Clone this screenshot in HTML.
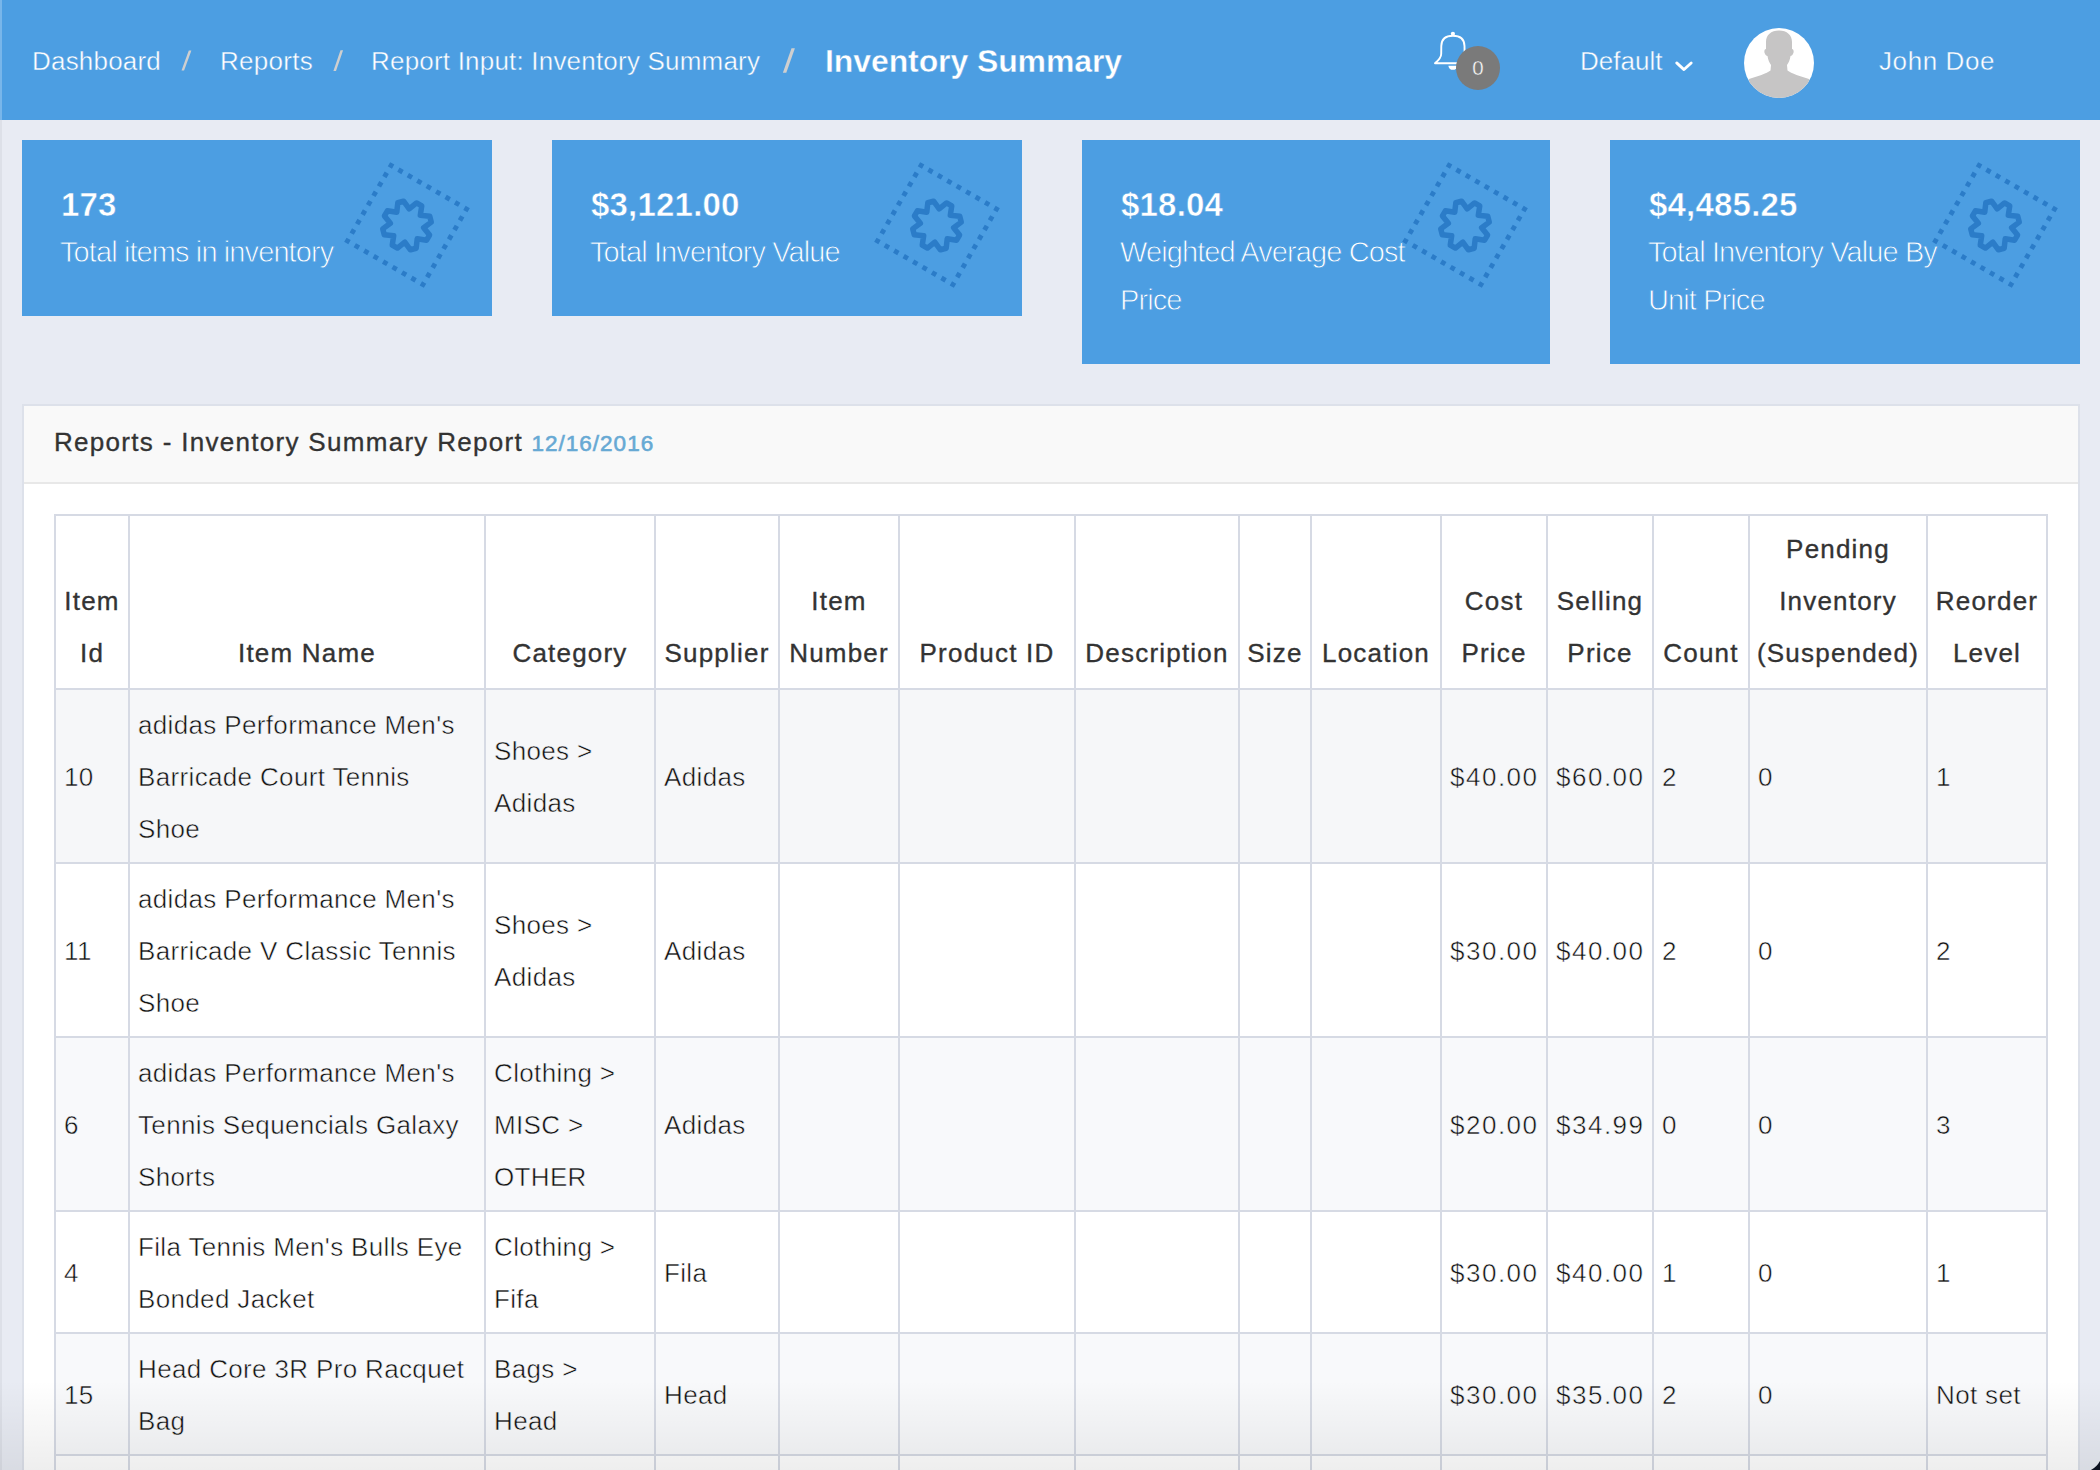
<!DOCTYPE html>
<html><head><meta charset="utf-8">
<style>
html,body{margin:0;padding:0;}
body{width:2100px;height:1470px;overflow:hidden;position:relative;background:#e8ebf3;font-family:"Liberation Sans",sans-serif;}
.abs{position:absolute;}
.hdr{position:absolute;left:0;top:0;width:2100px;height:120px;background:#4c9ee2;}
.bc{position:absolute;top:1px;height:120px;line-height:120px;color:#fff;font-size:26px;white-space:nowrap;-webkit-text-stroke:0.4px #4c9ee2;}
.sl{position:absolute;color:#cfcfcf;font-size:26px;}
.card{position:absolute;top:140px;background:#4c9ee2;color:#fff;overflow:hidden;}
.num{position:absolute;left:39px;font-size:33px;font-weight:bold;letter-spacing:0.2px;white-space:nowrap;-webkit-text-stroke:0.5px #4c9ee2;}
.lbl{position:absolute;left:38px;font-size:29px;letter-spacing:-0.9px;line-height:48px;white-space:nowrap;-webkit-text-stroke:0.8px #4c9ee2;}
.cell{position:absolute;box-sizing:border-box;padding:8px;line-height:52px;font-size:26px;color:#222;white-space:nowrap;overflow:hidden;}
.th{display:flex;align-items:flex-end;justify-content:center;text-align:center;color:#333;padding-bottom:9px;letter-spacing:1.2px;-webkit-text-stroke:0.35px #333;}
.td{display:flex;align-items:center;letter-spacing:0.35px;color:#111;padding-top:9px;padding-bottom:7px;}
.pr{letter-spacing:1.5px;}
</style></head><body>

<div class="abs" style="left:0;top:0;width:2px;height:1470px;background:#dde0e8"></div>
<div class="hdr"></div>
<div class="abs" style="left:0;top:0;width:2px;height:120px;background:#78b6ea"></div>
<div class="bc" style="left:32px;letter-spacing:0.2px">Dashboard</div>
<div class="bc" style="left:220px;letter-spacing:0.3px">Reports</div>
<div class="bc" style="left:371px;letter-spacing:0.2px">Report Input: Inventory Summary</div>
<div class="bc" style="left:825px;font-size:32px;font-weight:bold;letter-spacing:-0.1px;">Inventory Summary</div>
<svg class="abs" style="left:0;top:0" width="800" height="80"><polygon points="188.8,50.6 191.4,50.6 184.1,70.4 181.5,70.4" fill="#cfcfcf"/></svg>
<svg class="abs" style="left:0;top:0" width="800" height="80"><polygon points="340.5,50.2 343.1,50.2 336.0,70.9 333.4,70.9" fill="#cfcfcf"/></svg>
<svg class="abs" style="left:0;top:0" width="800" height="80"><polygon points="791.5,48.2 794.9,48.2 786.3,72.7 782.9,72.7" fill="#cfcfcf"/></svg>
<svg class="abs" style="left:1430px;top:28px" width="46" height="46" viewBox="0 0 46 46">
<path d="M5 35.3 C 9 32, 11.2 29, 11.2 26 L 11.3 18 C 11.5 11, 16 7.8, 22.9 7.8 C 29.8 7.8, 34.3 11, 34.5 18 L 34.6 26 C 34.6 29, 36.8 32, 40.8 35.3 Z" fill="none" stroke="#fff" stroke-width="1.9" stroke-linejoin="round"/>
<circle cx="22.9" cy="5.8" r="2.1" fill="#fff"/>
<path d="M18.4 37.8 A4.5 4 0 0 0 27.4 37.8 Z" fill="#fff"/>
</svg>
<div class="abs" style="left:1456px;top:46px;width:44px;height:44px;border-radius:50%;background:#7a7a7a;color:#fff;font-size:20.5px;line-height:44px;text-align:center;-webkit-text-stroke:0.4px #7a7a7a;">0</div>
<div class="bc" style="left:1580px;">Default</div>
<svg class="abs" style="left:1673px;top:59px" width="22" height="14"><polyline points="3.7,3.9 11,10.6 18.2,3.9" fill="none" stroke="#fff" stroke-width="2.8" stroke-linecap="round" stroke-linejoin="round"/></svg>
<svg class="abs" style="left:1744px;top:28px" width="70" height="70" viewBox="0 0 70 70">
<defs><clipPath id="cc"><circle cx="35" cy="35" r="35"/></clipPath></defs>
<circle cx="35" cy="35" r="35" fill="#fff"/>
<g clip-path="url(#cc)" fill="#c6c5c5">
<path d="M35 2.5 C 27 2.5, 22 7, 22 14 L 22 21 C 20.5 21, 20 23, 20.6 25 C 21.2 27, 22.5 28, 23.5 28 C 24 32, 25.5 35, 27 37 L 26.5 42.5 C 23 45.5, 13 48.5, 5 51 L 0 70 L 70 70 L 65 51 C 57 48.5, 47 45.5, 43.5 42.5 L 43 37 C 44.5 35, 46 32, 46.5 28 C 47.5 28, 48.8 27, 49.4 25 C 50 23, 49.5 21, 48 21 L 48 14 C 48 7, 43 2.5, 35 2.5 Z"/>
</g></svg>
<div class="bc" style="left:1879px;letter-spacing:0.6px">John Doe</div>
<div class="card" style="left:22px;width:470px;height:176px;">
<svg style="position:absolute;left:315px;top:15px" width="140" height="140" viewBox="0 0 140 140">
<g transform="rotate(30 70 70)">
<rect x="26.4" y="26.4" width="87.2" height="87.2" fill="none" stroke="#2b7cc8" stroke-width="4.8" stroke-dasharray="4.8 6.1" stroke-dashoffset="2.4"/>
</g>
<path d="M79.57,47.95 L84.74,50.93 L83.33,60.27 L92.72,61.32 L94.26,67.09 L86.66,72.69 L92.55,80.07 L89.57,85.24 L80.23,83.83 L79.18,93.22 L73.41,94.76 L67.81,87.16 L60.43,93.05 L55.26,90.07 L56.67,80.73 L47.28,79.68 L45.74,73.91 L53.34,68.31 L47.45,60.93 L50.43,55.76 L59.77,57.17 L60.82,47.78 L66.59,46.24 L72.19,53.84 Z" fill="none" stroke="#2b7cc8" stroke-width="5.5" stroke-linejoin="round"/>
</svg>
<div class="num" style="top:46px;">173</div>
<div class="lbl" style="top:88px;">Total items in inventory</div>
</div>
<div class="card" style="left:552px;width:470px;height:176px;">
<svg style="position:absolute;left:315px;top:15px" width="140" height="140" viewBox="0 0 140 140">
<g transform="rotate(30 70 70)">
<rect x="26.4" y="26.4" width="87.2" height="87.2" fill="none" stroke="#2b7cc8" stroke-width="4.8" stroke-dasharray="4.8 6.1" stroke-dashoffset="2.4"/>
</g>
<path d="M79.57,47.95 L84.74,50.93 L83.33,60.27 L92.72,61.32 L94.26,67.09 L86.66,72.69 L92.55,80.07 L89.57,85.24 L80.23,83.83 L79.18,93.22 L73.41,94.76 L67.81,87.16 L60.43,93.05 L55.26,90.07 L56.67,80.73 L47.28,79.68 L45.74,73.91 L53.34,68.31 L47.45,60.93 L50.43,55.76 L59.77,57.17 L60.82,47.78 L66.59,46.24 L72.19,53.84 Z" fill="none" stroke="#2b7cc8" stroke-width="5.5" stroke-linejoin="round"/>
</svg>
<div class="num" style="top:46px;">$3,121.00</div>
<div class="lbl" style="top:88px;">Total Inventory Value</div>
</div>
<div class="card" style="left:1082px;width:468px;height:224px;">
<svg style="position:absolute;left:313px;top:15px" width="140" height="140" viewBox="0 0 140 140">
<g transform="rotate(30 70 70)">
<rect x="26.4" y="26.4" width="87.2" height="87.2" fill="none" stroke="#2b7cc8" stroke-width="4.8" stroke-dasharray="4.8 6.1" stroke-dashoffset="2.4"/>
</g>
<path d="M79.57,47.95 L84.74,50.93 L83.33,60.27 L92.72,61.32 L94.26,67.09 L86.66,72.69 L92.55,80.07 L89.57,85.24 L80.23,83.83 L79.18,93.22 L73.41,94.76 L67.81,87.16 L60.43,93.05 L55.26,90.07 L56.67,80.73 L47.28,79.68 L45.74,73.91 L53.34,68.31 L47.45,60.93 L50.43,55.76 L59.77,57.17 L60.82,47.78 L66.59,46.24 L72.19,53.84 Z" fill="none" stroke="#2b7cc8" stroke-width="5.5" stroke-linejoin="round"/>
</svg>
<div class="num" style="top:46px;">$18.04</div>
<div class="lbl" style="top:88px;">Weighted Average Cost<br>Price</div>
</div>
<div class="card" style="left:1610px;width:470px;height:224px;">
<svg style="position:absolute;left:315px;top:15px" width="140" height="140" viewBox="0 0 140 140">
<g transform="rotate(30 70 70)">
<rect x="26.4" y="26.4" width="87.2" height="87.2" fill="none" stroke="#2b7cc8" stroke-width="4.8" stroke-dasharray="4.8 6.1" stroke-dashoffset="2.4"/>
</g>
<path d="M79.57,47.95 L84.74,50.93 L83.33,60.27 L92.72,61.32 L94.26,67.09 L86.66,72.69 L92.55,80.07 L89.57,85.24 L80.23,83.83 L79.18,93.22 L73.41,94.76 L67.81,87.16 L60.43,93.05 L55.26,90.07 L56.67,80.73 L47.28,79.68 L45.74,73.91 L53.34,68.31 L47.45,60.93 L50.43,55.76 L59.77,57.17 L60.82,47.78 L66.59,46.24 L72.19,53.84 Z" fill="none" stroke="#2b7cc8" stroke-width="5.5" stroke-linejoin="round"/>
</svg>
<div class="num" style="top:46px;">$4,485.25</div>
<div class="lbl" style="top:88px;">Total Inventory Value By<br>Unit Price</div>
</div>
<div class="abs" style="left:22px;top:404px;width:2054px;height:1100px;border:2px solid #dde1ea;background:#fff;"></div>
<div class="abs" style="left:24px;top:406px;width:2054px;height:76px;background:#f9f9f9;border-bottom:2px solid #e8e8e8;"></div>
<div class="abs" style="left:54px;top:406px;height:72px;line-height:72px;font-size:26px;color:#333;letter-spacing:1.3px;-webkit-text-stroke:0.35px #333;white-space:nowrap;">Reports - Inventory Summary Report <span style="color:#67a9d4;font-size:22.5px;letter-spacing:1px;-webkit-text-stroke:0.6px #67a9d4;">12/16/2016</span></div>
<div class="abs" style="left:56px;top:516px;width:1990px;height:172px;background:#fff"></div>
<div class="abs" style="left:56px;top:690px;width:1990px;height:172px;background:#f6f7f9"></div>
<div class="abs" style="left:56px;top:864px;width:1990px;height:172px;background:#fff"></div>
<div class="abs" style="left:56px;top:1038px;width:1990px;height:172px;background:#f8f9fb"></div>
<div class="abs" style="left:56px;top:1212px;width:1990px;height:120px;background:#fff"></div>
<div class="abs" style="left:56px;top:1334px;width:1990px;height:120px;background:#f8f9fb"></div>
<div class="abs" style="left:56px;top:1456px;width:1990px;height:172px;background:#fff"></div>
<div class="abs" style="left:54px;top:514px;width:2px;height:956px;background:#d6dae4"></div>
<div class="abs" style="left:128px;top:514px;width:2px;height:956px;background:#d6dae4"></div>
<div class="abs" style="left:484px;top:514px;width:2px;height:956px;background:#d6dae4"></div>
<div class="abs" style="left:654px;top:514px;width:2px;height:956px;background:#d6dae4"></div>
<div class="abs" style="left:778px;top:514px;width:2px;height:956px;background:#d6dae4"></div>
<div class="abs" style="left:898px;top:514px;width:2px;height:956px;background:#d6dae4"></div>
<div class="abs" style="left:1074px;top:514px;width:2px;height:956px;background:#d6dae4"></div>
<div class="abs" style="left:1238px;top:514px;width:2px;height:956px;background:#d6dae4"></div>
<div class="abs" style="left:1310px;top:514px;width:2px;height:956px;background:#d6dae4"></div>
<div class="abs" style="left:1440px;top:514px;width:2px;height:956px;background:#d6dae4"></div>
<div class="abs" style="left:1546px;top:514px;width:2px;height:956px;background:#d6dae4"></div>
<div class="abs" style="left:1652px;top:514px;width:2px;height:956px;background:#d6dae4"></div>
<div class="abs" style="left:1748px;top:514px;width:2px;height:956px;background:#d6dae4"></div>
<div class="abs" style="left:1926px;top:514px;width:2px;height:956px;background:#d6dae4"></div>
<div class="abs" style="left:2046px;top:514px;width:2px;height:956px;background:#d6dae4"></div>
<div class="abs" style="left:54px;top:514px;width:1994px;height:2px;background:#d6dae4"></div>
<div class="abs" style="left:54px;top:688px;width:1994px;height:2px;background:#d6dae4"></div>
<div class="abs" style="left:54px;top:862px;width:1994px;height:2px;background:#d6dae4"></div>
<div class="abs" style="left:54px;top:1036px;width:1994px;height:2px;background:#d6dae4"></div>
<div class="abs" style="left:54px;top:1210px;width:1994px;height:2px;background:#d6dae4"></div>
<div class="abs" style="left:54px;top:1332px;width:1994px;height:2px;background:#d6dae4"></div>
<div class="abs" style="left:54px;top:1454px;width:1994px;height:2px;background:#d6dae4"></div>
<div class="cell th" style="left:56px;top:516px;width:72px;height:172px;"><div>Item<br>Id</div></div>
<div class="cell th" style="left:130px;top:516px;width:354px;height:172px;"><div>Item Name</div></div>
<div class="cell th" style="left:486px;top:516px;width:168px;height:172px;"><div>Category</div></div>
<div class="cell th" style="left:656px;top:516px;width:122px;height:172px;"><div>Supplier</div></div>
<div class="cell th" style="left:780px;top:516px;width:118px;height:172px;"><div>Item<br>Number</div></div>
<div class="cell th" style="left:900px;top:516px;width:174px;height:172px;"><div>Product ID</div></div>
<div class="cell th" style="left:1076px;top:516px;width:162px;height:172px;"><div>Description</div></div>
<div class="cell th" style="left:1240px;top:516px;width:70px;height:172px;"><div>Size</div></div>
<div class="cell th" style="left:1312px;top:516px;width:128px;height:172px;"><div>Location</div></div>
<div class="cell th" style="left:1442px;top:516px;width:104px;height:172px;"><div>Cost<br>Price</div></div>
<div class="cell th" style="left:1548px;top:516px;width:104px;height:172px;"><div>Selling<br>Price</div></div>
<div class="cell th" style="left:1654px;top:516px;width:94px;height:172px;"><div>Count</div></div>
<div class="cell th" style="left:1750px;top:516px;width:176px;height:172px;"><div>Pending<br>Inventory<br>(Suspended)</div></div>
<div class="cell th" style="left:1928px;top:516px;width:118px;height:172px;"><div>Reorder<br>Level</div></div>
<div class="cell td" style="left:56px;top:690px;width:72px;height:172px;-webkit-text-stroke:0.5px #f6f7f9;"><div>10</div></div>
<div class="cell td" style="left:130px;top:690px;width:354px;height:172px;-webkit-text-stroke:0.5px #f6f7f9;"><div>adidas Performance Men's<br>Barricade Court Tennis<br>Shoe</div></div>
<div class="cell td" style="left:486px;top:690px;width:168px;height:172px;-webkit-text-stroke:0.5px #f6f7f9;"><div>Shoes &gt;<br>Adidas</div></div>
<div class="cell td" style="left:656px;top:690px;width:122px;height:172px;-webkit-text-stroke:0.5px #f6f7f9;"><div>Adidas</div></div>
<div class="cell td pr" style="left:1442px;top:690px;width:104px;height:172px;-webkit-text-stroke:0.5px #f6f7f9;"><div>$40.00</div></div>
<div class="cell td pr" style="left:1548px;top:690px;width:104px;height:172px;-webkit-text-stroke:0.5px #f6f7f9;"><div>$60.00</div></div>
<div class="cell td" style="left:1654px;top:690px;width:94px;height:172px;-webkit-text-stroke:0.5px #f6f7f9;"><div>2</div></div>
<div class="cell td" style="left:1750px;top:690px;width:176px;height:172px;-webkit-text-stroke:0.5px #f6f7f9;"><div>0</div></div>
<div class="cell td" style="left:1928px;top:690px;width:118px;height:172px;-webkit-text-stroke:0.5px #f6f7f9;"><div>1</div></div>
<div class="cell td" style="left:56px;top:864px;width:72px;height:172px;-webkit-text-stroke:0.5px #ffffff;"><div>11</div></div>
<div class="cell td" style="left:130px;top:864px;width:354px;height:172px;-webkit-text-stroke:0.5px #ffffff;"><div>adidas Performance Men's<br>Barricade V Classic Tennis<br>Shoe</div></div>
<div class="cell td" style="left:486px;top:864px;width:168px;height:172px;-webkit-text-stroke:0.5px #ffffff;"><div>Shoes &gt;<br>Adidas</div></div>
<div class="cell td" style="left:656px;top:864px;width:122px;height:172px;-webkit-text-stroke:0.5px #ffffff;"><div>Adidas</div></div>
<div class="cell td pr" style="left:1442px;top:864px;width:104px;height:172px;-webkit-text-stroke:0.5px #ffffff;"><div>$30.00</div></div>
<div class="cell td pr" style="left:1548px;top:864px;width:104px;height:172px;-webkit-text-stroke:0.5px #ffffff;"><div>$40.00</div></div>
<div class="cell td" style="left:1654px;top:864px;width:94px;height:172px;-webkit-text-stroke:0.5px #ffffff;"><div>2</div></div>
<div class="cell td" style="left:1750px;top:864px;width:176px;height:172px;-webkit-text-stroke:0.5px #ffffff;"><div>0</div></div>
<div class="cell td" style="left:1928px;top:864px;width:118px;height:172px;-webkit-text-stroke:0.5px #ffffff;"><div>2</div></div>
<div class="cell td" style="left:56px;top:1038px;width:72px;height:172px;-webkit-text-stroke:0.5px #f8f9fb;"><div>6</div></div>
<div class="cell td" style="left:130px;top:1038px;width:354px;height:172px;-webkit-text-stroke:0.5px #f8f9fb;"><div>adidas Performance Men's<br>Tennis Sequencials Galaxy<br>Shorts</div></div>
<div class="cell td" style="left:486px;top:1038px;width:168px;height:172px;-webkit-text-stroke:0.5px #f8f9fb;"><div>Clothing &gt;<br>MISC &gt;<br>OTHER</div></div>
<div class="cell td" style="left:656px;top:1038px;width:122px;height:172px;-webkit-text-stroke:0.5px #f8f9fb;"><div>Adidas</div></div>
<div class="cell td pr" style="left:1442px;top:1038px;width:104px;height:172px;-webkit-text-stroke:0.5px #f8f9fb;"><div>$20.00</div></div>
<div class="cell td pr" style="left:1548px;top:1038px;width:104px;height:172px;-webkit-text-stroke:0.5px #f8f9fb;"><div>$34.99</div></div>
<div class="cell td" style="left:1654px;top:1038px;width:94px;height:172px;-webkit-text-stroke:0.5px #f8f9fb;"><div>0</div></div>
<div class="cell td" style="left:1750px;top:1038px;width:176px;height:172px;-webkit-text-stroke:0.5px #f8f9fb;"><div>0</div></div>
<div class="cell td" style="left:1928px;top:1038px;width:118px;height:172px;-webkit-text-stroke:0.5px #f8f9fb;"><div>3</div></div>
<div class="cell td" style="left:56px;top:1212px;width:72px;height:120px;-webkit-text-stroke:0.5px #ffffff;"><div>4</div></div>
<div class="cell td" style="left:130px;top:1212px;width:354px;height:120px;-webkit-text-stroke:0.5px #ffffff;"><div>Fila Tennis Men's Bulls Eye<br>Bonded Jacket</div></div>
<div class="cell td" style="left:486px;top:1212px;width:168px;height:120px;-webkit-text-stroke:0.5px #ffffff;"><div>Clothing &gt;<br>Fifa</div></div>
<div class="cell td" style="left:656px;top:1212px;width:122px;height:120px;-webkit-text-stroke:0.5px #ffffff;"><div>Fila</div></div>
<div class="cell td pr" style="left:1442px;top:1212px;width:104px;height:120px;-webkit-text-stroke:0.5px #ffffff;"><div>$30.00</div></div>
<div class="cell td pr" style="left:1548px;top:1212px;width:104px;height:120px;-webkit-text-stroke:0.5px #ffffff;"><div>$40.00</div></div>
<div class="cell td" style="left:1654px;top:1212px;width:94px;height:120px;-webkit-text-stroke:0.5px #ffffff;"><div>1</div></div>
<div class="cell td" style="left:1750px;top:1212px;width:176px;height:120px;-webkit-text-stroke:0.5px #ffffff;"><div>0</div></div>
<div class="cell td" style="left:1928px;top:1212px;width:118px;height:120px;-webkit-text-stroke:0.5px #ffffff;"><div>1</div></div>
<div class="cell td" style="left:56px;top:1334px;width:72px;height:120px;-webkit-text-stroke:0.5px #f8f9fb;"><div>15</div></div>
<div class="cell td" style="left:130px;top:1334px;width:354px;height:120px;-webkit-text-stroke:0.5px #f8f9fb;"><div>Head Core 3R Pro Racquet<br>Bag</div></div>
<div class="cell td" style="left:486px;top:1334px;width:168px;height:120px;-webkit-text-stroke:0.5px #f8f9fb;"><div>Bags &gt;<br>Head</div></div>
<div class="cell td" style="left:656px;top:1334px;width:122px;height:120px;-webkit-text-stroke:0.5px #f8f9fb;"><div>Head</div></div>
<div class="cell td pr" style="left:1442px;top:1334px;width:104px;height:120px;-webkit-text-stroke:0.5px #f8f9fb;"><div>$30.00</div></div>
<div class="cell td pr" style="left:1548px;top:1334px;width:104px;height:120px;-webkit-text-stroke:0.5px #f8f9fb;"><div>$35.00</div></div>
<div class="cell td" style="left:1654px;top:1334px;width:94px;height:120px;-webkit-text-stroke:0.5px #f8f9fb;"><div>2</div></div>
<div class="cell td" style="left:1750px;top:1334px;width:176px;height:120px;-webkit-text-stroke:0.5px #f8f9fb;"><div>0</div></div>
<div class="cell td" style="left:1928px;top:1334px;width:118px;height:120px;-webkit-text-stroke:0.5px #f8f9fb;"><div>Not set</div></div>
<div class="abs" style="left:0;top:1380px;width:2100px;height:90px;background:linear-gradient(to bottom, rgba(0,0,0,0), rgba(0,0,0,0.065));"></div>
<svg class="abs" style="left:2070px;top:1440px" width="30" height="30"><path d="M30 20.95 A22.8 22.8 0 0 1 20.95 30 L30 30 Z" fill="#0d1120"/></svg>
</body></html>
